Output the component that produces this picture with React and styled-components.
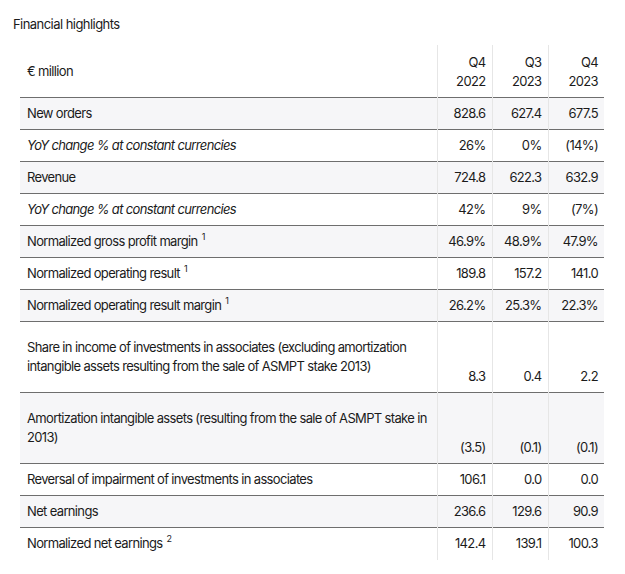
import React from "react";
import styled, { createGlobalStyle } from "styled-components";

const Global = createGlobalStyle`
  html, body { margin: 0; padding: 0; background: #fff; }
  body { font-family: Inter, "Noto Sans", Arial, sans-serif; color: #1b1b1b; }
`;

const Page = styled.div`
  padding: 15px 21px 0 13px;
  width: 625px;
  box-sizing: border-box;
`;

const Title = styled.div`
  font-size: 13px;
  line-height: 19px;
  letter-spacing: -0.55px;
  margin-bottom: 11px;
`;

const Table = styled.table`
  border-collapse: collapse;
  width: 584px;
  margin-left: 7px;
  font-size: 13px;
  line-height: 19px;
  letter-spacing: -0.65px;
  table-layout: fixed;
`;

const Row = styled.tr`
  background: ${(p) => (p.$shade ? "#f6f6f8" : "#fff")};
  border-bottom: 1px solid ${(p) => (p.$last ? "transparent" : "#6e6e6e")};
`;

const Label = styled.td`
  padding: ${(p) => (p.$tall ? "16px 2px 16px 7px" : "6px 2px 6px 7px")};
  font-style: ${(p) => (p.$italic ? "italic" : "normal")};
  vertical-align: middle;
  text-align: left;
`;

const Value = styled.td`
  padding: 6px 6px;
  text-align: right;
  vertical-align: bottom;
  border-left: 1px solid #e6e6e6;
`;

const HeadLabel = styled.th`
  padding: 8px 7px;
  font-weight: 400;
  text-align: left;
  vertical-align: middle;
`;

const HeadValue = styled.th`
  padding: 8px 6px 6px;
  font-weight: 400;
  text-align: right;
  vertical-align: bottom;
  border-left: 1px solid #e6e6e6;
`;

const Sup = styled.sup`
  font-size: 9px;
  line-height: 0;
  margin-left: 4px;
  vertical-align: 6px;
`;

const rows = [
  { label: "New orders", v: ["828.6", "627.4", "677.5"] },
  { label: "YoY change % at constant currencies", italic: true, v: ["26%", "0%", "(14%)"] },
  { label: "Revenue", v: ["724.8", "622.3", "632.9"] },
  { label: "YoY change % at constant currencies", italic: true, v: ["42%", "9%", "(7%)"] },
  { label: "Normalized gross profit margin", sup: "1", v: ["46.9%", "48.9%", "47.9%"] },
  { label: "Normalized operating result", sup: "1", v: ["189.8", "157.2", "141.0"] },
  { label: "Normalized operating result margin", sup: "1", v: ["26.2%", "25.3%", "22.3%"] },
  {
    label:
      "Share in income of investments in associates (excluding amortization intangible assets resulting from the sale of ASMPT stake 2013)",
    tall: true,
    v: ["8.3", "0.4", "2.2"],
  },
  {
    label: "Amortization intangible assets (resulting from the sale of ASMPT stake in 2013)",
    tall: true,
    v: ["(3.5)", "(0.1)", "(0.1)"],
  },
  { label: "Reversal of impairment of investments in associates", v: ["106.1", "0.0", "0.0"] },
  { label: "Net earnings", v: ["236.6", "129.6", "90.9"] },
  { label: "Normalized net earnings", sup: "2", v: ["142.4", "139.1", "100.3"] },
];

export default function App() {
  return (
    <Page>
      <Global />
      <Title>Financial highlights</Title>
      <Table>
        <colgroup>
          <col style={{ width: "417px" }} />
          <col style={{ width: "55px" }} />
          <col style={{ width: "56px" }} />
          <col style={{ width: "56px" }} />
        </colgroup>
        <thead>
          <Row>
            <HeadLabel>€ million</HeadLabel>
            <HeadValue>Q4<br />2022</HeadValue>
            <HeadValue>Q3<br />2023</HeadValue>
            <HeadValue>Q4<br />2023</HeadValue>
          </Row>
        </thead>
        <tbody>
          {rows.map((r, i) => (
            <Row key={i} $shade={i % 2 === 0} $last={i === rows.length - 1}>
              <Label $italic={r.italic} $tall={r.tall}>
                {r.label}
                {r.sup && <Sup>{r.sup}</Sup>}
              </Label>
              {r.v.map((x, j) => (
                <Value key={j}>{x}</Value>
              ))}
            </Row>
          ))}
        </tbody>
      </Table>
    </Page>
  );
}
